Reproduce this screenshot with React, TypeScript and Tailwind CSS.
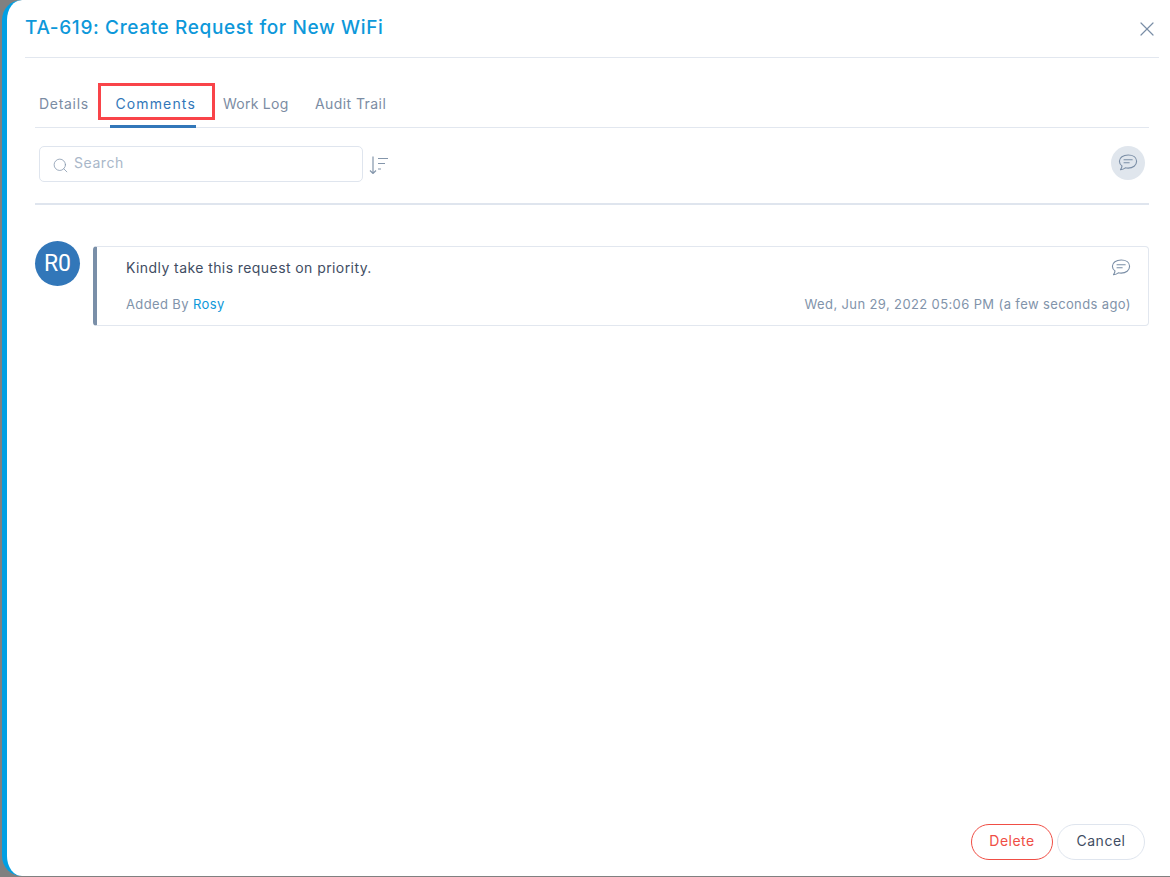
import { Search, X } from "lucide-react"

function ChatIcon({ className }: { className?: string }) {
  return (
    <svg viewBox="0 0 20 18" fill="none" stroke="currentColor" strokeWidth="1.1" className={className}>
      <path d="M10.2 1C5.2 1 1.4 3.6 1.4 7.3c0 1.9 1 3.5 2.6 4.6-.1 1.3-.7 2.6-1.5 3.9 1.9-.3 3.6-1 4.8-2 .9.2 1.8.3 2.8.3 4.8 0 8.5-2.8 8.5-6.8S15 1 10.2 1Z" strokeLinejoin="round" />
      <path d="M6 5.8h8.2M6 8.8h5.2" strokeLinecap="round" />
    </svg>
  )
}

function SortIcon() {
  return (
    <svg viewBox="0 0 20 18" fill="none" stroke="currentColor" strokeWidth="1.2" className="h-[18px] w-5 text-[#8496ab]">
      <path d="M4 .5v17M1 14.5l3 3 3-3" />
      <path d="M9 2.5h10M9 7.5h7M9 13h3" />
    </svg>
  )
}

export default function App() {
  return (
    <div className="h-[877px] w-[1170px] overflow-hidden bg-[#808080] pb-px pl-[2px] font-['Inter',sans-serif]">
      <div className="relative flex h-full flex-col rounded-l-[20px] border-l-[5px] border-[#009fe3] bg-white">
        {/* header */}
        <div className="ml-[18px] mr-[11px] flex h-[58px] items-center justify-between border-b border-[#e2e7ef]">
          <h1 className="text-[19px] font-medium tracking-[0.63px] text-[#0d98da]">TA-619: Create Request for New WiFi</h1>
          <X strokeWidth={1.2} className="mt-[1px] h-[24px] w-[24px] text-[#7a8ea6]" />
        </div>

        <div className="ml-[28px] mr-[21px] flex flex-1 flex-col">
          {/* tabs */}
          <div className="mt-[26px] flex h-[44px] items-start whitespace-nowrap border-b border-[#e2e7ef] pl-[4px] text-[14px] tracking-[0.25px] text-[#7b8ca3]">
            <div className="mr-[22px] w-[49px] pt-[9px] tracking-[0.7px]">Details</div>
            <div className="mr-[27px] flex h-[44px] w-[86px] justify-end border-b-[3px] border-[#3277b9] pt-[9px] tracking-[1.15px] text-[#3277b9]">
              Comments
            </div>
            <div className="mr-[27px] w-[65px] pt-[9px]">Work Log</div>
            <div className="pt-[9px] tracking-[0.42px]">Audit Trail</div>
          </div>

          {/* toolbar */}
          <div className="flex h-[77px] items-start border-b-2 border-[#dfe5ee] px-[4px] pt-[18px]">
            <div className="flex h-[36px] w-[324px] items-center gap-[5px] rounded-[5px] border border-[#dfe5ee] pl-[12px]">
              <Search strokeWidth={1.1} className="mt-[3px] h-[17px] w-[17px] text-[#8496ab]" />
              <span className="mb-[3px] text-[14px] tracking-[0.55px] text-[#a9b7c9]">Search</span>
            </div>
            <div className="ml-[6px] mt-[10px]">
              <SortIcon />
            </div>
            <div className="ml-auto flex h-[34px] w-[34px] items-center justify-center rounded-full bg-[#e0e6ed] text-[#7a8ea6]">
              <ChatIcon className="h-[18px] w-[20px]" />
            </div>
          </div>

          {/* comment */}
          <div className="mt-[36px] flex items-start gap-[13px]">
            <div className="flex h-[45px] w-[45px] shrink-0 items-center justify-center rounded-full bg-[#3277b9] pt-px font-['Roboto',sans-serif] text-[23px] text-white">
              R0
            </div>
            <div className="mt-[5px] flex h-[80px] flex-1 flex-col rounded-[4px] border border-l-4 border-[#e2e7ef] border-l-[#7a8fa8] pb-[11px] pl-[29px] pr-[17px] pt-[10px]">
              <div className="flex items-center justify-between">
                <p className="text-[14px] tracking-[0.42px] text-[#3f4d63]">Kindly take this request on priority.</p>
                <ChatIcon className="h-[18px] w-[20px] text-[#7a8ea6]" />
              </div>
              <div className="mt-auto flex items-center justify-between text-[13px] tracking-[0.38px] text-[#8193aa]">
                <span>
                  Added By <span className="text-[#0d98da]">Rosy</span>
                </span>
                <span>Wed, Jun 29, 2022 05:06 PM (a few seconds ago)</span>
              </div>
            </div>
          </div>

          {/* footer */}
          <div className="mb-[16px] mt-auto flex justify-end gap-[4px] pr-[4px] text-[14px] tracking-[0.5px]">
            <button className="h-[36px] w-[82px] rounded-full border border-[#f04e45] pb-[3px] text-[#f04e45]">Delete</button>
            <button className="h-[36px] w-[88px] rounded-full border border-[#dfe5ee] pb-[3px] text-[#3f4d63]">Cancel</button>
          </div>
        </div>

        {/* red highlight drawn over the tab */}
        <div className="absolute left-[91px] top-[83px] h-[37px] w-[117px] border-[3px] border-[#f94449]" />
      </div>
    </div>
  )
}
